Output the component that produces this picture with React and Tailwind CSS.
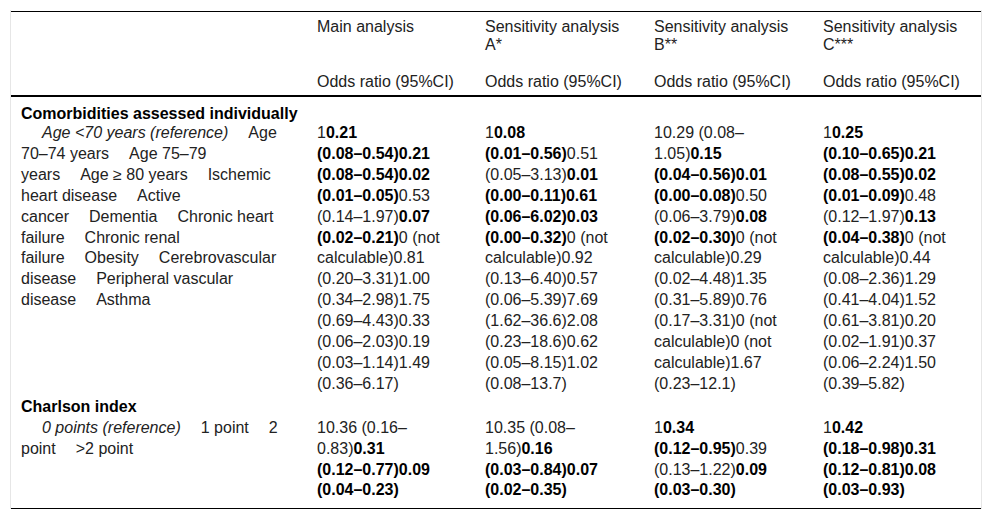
import React from 'react'

// bold parts are wrapped in [ ]
const main = [
  '1[0.21]', '[(0.08–0.54)0.21]', '[(0.08–0.54)0.02]', '[(0.01–0.05)]0.53', '(0.14–1.97)[0.07]',
  '[(0.02–0.21)]0 (not', 'calculable)0.81', '(0.20–3.31)1.00', '(0.34–2.98)1.75', '(0.69–4.43)0.33',
  '(0.06–2.03)0.19', '(0.03–1.14)1.49', '(0.36–6.17)',
]
const sensA = [
  '1[0.08]', '[(0.01–0.56)]0.51', '(0.05–3.13)[0.01]', '[(0.00–0.11)0.61]', '[(0.06–6.02)0.03]',
  '[(0.00–0.32)]0 (not', 'calculable)0.92', '(0.13–6.40)0.57', '(0.06–5.39)7.69', '(1.62–36.6)2.08',
  '(0.23–18.6)0.62', '(0.05–8.15)1.02', '(0.08–13.7)',
]
const sensB = [
  '10.29 (0.08–', '1.05)[0.15]', '[(0.04–0.56)0.01]', '[(0.00–0.08)]0.50', '(0.06–3.79)[0.08]',
  '[(0.02–0.30)]0 (not', 'calculable)0.29', '(0.02–4.48)1.35', '(0.31–5.89)0.76', '(0.17–3.31)0 (not',
  'calculable)0 (not', 'calculable)1.67', '(0.23–12.1)',
]
const sensC = [
  '1[0.25]', '[(0.10–0.65)0.21]', '[(0.08–0.55)0.02]', '[(0.01–0.09)]0.48', '(0.12–1.97)[0.13]',
  '[(0.04–0.38)]0 (not', 'calculable)0.44', '(0.08–2.36)1.29', '(0.41–4.04)1.52', '(0.61–3.81)0.20',
  '(0.02–1.91)0.37', '(0.06–2.24)1.50', '(0.39–5.82)',
]

const charlson = [
  ['10.36 (0.16–', '0.83)[0.31]', '[(0.12–0.77)0.09]', '[(0.04–0.23)]'],
  ['10.35 (0.08–', '1.56)[0.16]', '[(0.03–0.84)0.07]', '[(0.02–0.35)]'],
  ['1[0.34]', '[(0.12–0.95)]0.39', '(0.13–1.22)[0.09]', '[(0.03–0.30)]'],
  ['1[0.42]', '[(0.18–0.98)0.31]', '[(0.12–0.81)0.08]', '[(0.03–0.93)]'],
]

const comorbLines = [
  [<i key="r">Age &lt;70 years (reference)</i>, 'Age'],
  ['70–74 years', 'Age 75–79'],
  ['years', 'Age ≥ 80 years', 'Ischemic'],
  ['heart disease', 'Active'],
  ['cancer', 'Dementia', 'Chronic heart'],
  ['failure', 'Chronic renal'],
  ['failure', 'Obesity', 'Cerebrovascular'],
  ['disease', 'Peripheral vascular'],
  ['disease', 'Asthma'],
]

const charlsonLines = [
  [<i key="r">0 points (reference)</i>, '1 point', '2'],
  ['point', '>2 point'],
]

function Line({ text }) {
  const parts = text.split(/(\[[^\]]*\])/).filter(Boolean)
  return (
    <div className="whitespace-nowrap">
      {parts.map((p, i) =>
        p.startsWith('[') ? <b key={i} className="font-bold text-black">{p.slice(1, -1)}</b> : <span key={i}>{p}</span>
      )}
    </div>
  )
}

function ValueCell({ lines }) {
  return (
    <td className="align-top pl-[10px]">
      {lines.map((l, i) => <Line key={i} text={l} />)}
    </td>
  )
}

function LabelCell({ lines }) {
  return (
    <td className="align-top pl-[10px]">
      {lines.map((items, i) => (
        <div key={i} className={i === 0 ? 'whitespace-nowrap pl-[21px]' : 'whitespace-nowrap'}>
          {items.map((it, j) => (
            <span key={j} className={j > 0 ? 'ml-[20px]' : ''}>{it}</span>
          ))}
        </div>
      ))}
    </td>
  )
}

function App() {
  const heads = ['Main analysis', ['Sensitivity analysis', 'A*'], ['Sensitivity analysis', 'B**'], ['Sensitivity analysis', 'C***']]

  return (
    <div className="min-h-[521px] bg-white px-[10px] pt-[10px] font-['Liberation_Sans',Arial,sans-serif] text-[16px] text-[#222]">
      <div className="border-x border-[#e6e6e6] pt-px">
        <table className="w-full table-fixed border-collapse">
          <colgroup>
            <col className="w-[296px]" />
            <col className="w-[168px]" />
            <col className="w-[169px]" />
            <col className="w-[169px]" />
            <col className="w-[168px]" />
          </colgroup>
          <thead className="leading-[18px]">
            <tr className="border-t border-black">
              <th className="pt-[6px] pb-[8px]"></th>
              {heads.map((h, i) => (
                <th key={i} className="pt-[6px] pb-[8px] pl-[10px] text-left align-top font-normal">
                  {Array.isArray(h) ? h.map((t, j) => <div key={j}>{t}</div>) : h}
                </th>
              ))}
            </tr>
            <tr className="border-b-2 border-black">
              <th className="pt-[11px] pb-[4px]"></th>
              {heads.map((_, i) => (
                <th key={i} className="pt-[11px] pb-[4px] pl-[10px] text-left font-normal whitespace-nowrap">Odds ratio (95%CI)</th>
              ))}
            </tr>
          </thead>
          <tbody className="leading-[20.9px]">
            <tr>
              <td colSpan={5} className="pl-[10px] pt-[8px] leading-[18px] font-bold text-black">Comorbidities assessed individually</td>
            </tr>
            <tr>
              <LabelCell lines={comorbLines} />
              <ValueCell lines={main} />
              <ValueCell lines={sensA} />
              <ValueCell lines={sensB} />
              <ValueCell lines={sensC} />
            </tr>
            <tr>
              <td colSpan={5} className="pl-[10px] pt-[2px] font-bold text-black">Charlson index</td>
            </tr>
            <tr>
              <LabelCell lines={charlsonLines} />
              {charlson.map((c, i) => <ValueCell key={i} lines={c} />)}
            </tr>
            <tr className="border-b border-black">
              <td colSpan={5} className="h-[7px] p-0"></td>
            </tr>
          </tbody>
        </table>
      </div>
    </div>
  )
}

export default App
